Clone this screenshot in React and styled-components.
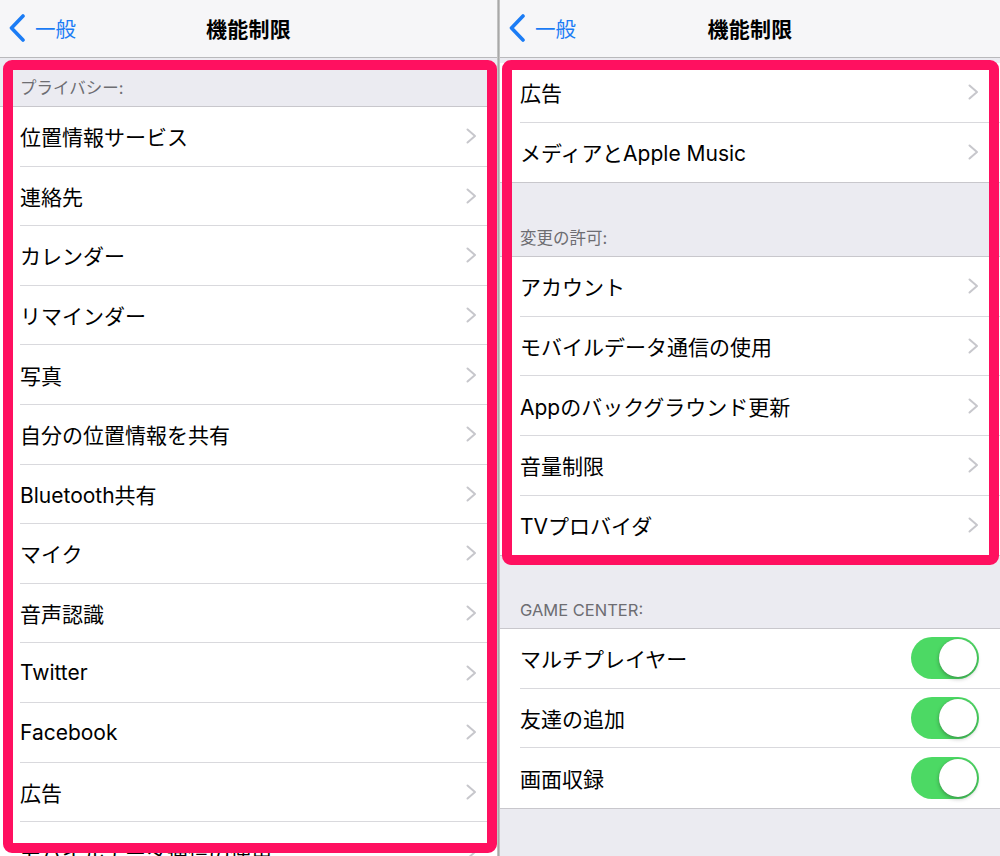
import React from 'react';
import styled, { createGlobalStyle } from 'styled-components';

const GlobalStyle = createGlobalStyle`
  body {
    margin: 0;
    background: #ebebf1;
    font-family: Inter, "Noto Sans CJK JP", sans-serif;
    -webkit-font-smoothing: antialiased;
  }
`;

const Screen = styled.div`
  display: flex;
  width: 1000px;
  height: 856px;
  overflow: hidden;
`;

const Panel = styled.div`
  position: relative;
  flex: none;
  width: ${(p) => p.$width}px;
  height: 856px;
  display: flex;
  flex-direction: column;
  background: #ebebf1;
  overflow: hidden;
`;

const Divider = styled.div`
  flex: none;
  width: 3px;
  background: linear-gradient(90deg, #d0d0d0, #a8a8a8 50%, #d0d0d0);
`;

const NavBar = styled.header`
  flex: none;
  height: 58px;
  box-sizing: border-box;
  padding-bottom: 2px;
  display: grid;
  grid-template-columns: 1fr auto 1fr;
  align-items: center;
  background: #f6f6f8;
  border-bottom: 1px solid #b9b9bc;
`;

const BackButton = styled.div`
  display: flex;
  align-items: center;
  gap: 10px;
  padding-left: 9px;
  color: #1b7cf5;
  font-size: 20.5px;
`;

const BackLabel = styled.span`
  line-height: 28px;
  padding-top: 4px;
`;

const Title = styled.h1`
  margin: 0;
  font-size: 21px;
  font-weight: 700;
  color: #000;
  letter-spacing: 0.3px;
`;

const Spacer = styled.div`
  flex: none;
  height: ${(p) => p.$h}px;
`;

const SectionHeader = styled.div`
  flex: none;
  height: ${(p) => p.$h}px;
  box-sizing: border-box;
  display: flex;
  align-items: flex-end;
  padding: 0 20px 7px;
  font-size: 16.5px;
  line-height: 22px;
  color: #6d6d72;
  border-bottom: 1px solid #c8c7cc;
`;

const Group = styled.div`
  flex: none;
  background: #fff;
  border-bottom: 1px solid #c8c7cc;
`;

const Row = styled.div`
  height: 59.6px;
  box-sizing: border-box;
  padding-left: 20px;
  display: flex;
`;

const RowBody = styled.div`
  flex: 1;
  display: flex;
  align-items: center;
  justify-content: space-between;
  padding-right: ${(p) => p.$pr}px;
  border-bottom: ${(p) => (p.$last ? 'none' : '1px solid #d9d9dd')};
`;

const Label = styled.span`
  font-size: 21px;
  color: #000;
  white-space: nowrap;
`;

const Toggle = styled.div`
  width: 68px;
  height: 42px;
  box-sizing: border-box;
  padding: 2px;
  border-radius: 21px;
  background: #4cd964;
  display: flex;
  justify-content: flex-end;
`;

const Knob = styled.div`
  width: 38px;
  height: 38px;
  border-radius: 50%;
  background: #fff;
  box-shadow: 0 2px 4px rgba(0, 0, 0, 0.28), 0 0 1px rgba(0, 0, 0, 0.2);
`;

const Highlight = styled.div`
  position: absolute;
  top: 60px;
  left: ${(p) => p.$left}px;
  width: ${(p) => p.$w}px;
  height: ${(p) => p.$h}px;
  box-sizing: border-box;
  border: 10px solid #ff1060;
  border-radius: 9px;
  pointer-events: none;
`;

const BackChevron = () => (
  <svg width="16" height="28" viewBox="0 0 16 28">
    <polyline
      points="14,2 2.5,14 14,26"
      fill="none"
      stroke="#1b7cf5"
      strokeWidth="3.6"
      strokeLinecap="round"
      strokeLinejoin="round"
    />
  </svg>
);

const Chevron = () => (
  <svg width="11" height="16" viewBox="0 0 11 16">
    <polyline
      points="1.5,1.5 9,8 1.5,14.5"
      fill="none"
      stroke="#c7c7cc"
      strokeWidth="2"
      strokeLinecap="round"
      strokeLinejoin="round"
    />
  </svg>
);

function Nav() {
  return (
    <NavBar>
      <BackButton>
        <BackChevron />
        <BackLabel>一般</BackLabel>
      </BackButton>
      <Title>機能制限</Title>
      <div />
    </NavBar>
  );
}

function List({ items, toggle, pr = 20 }) {
  return (
    <Group>
      {items.map((label, i) => (
        <Row key={label}>
          <RowBody $last={i === items.length - 1} $pr={pr}>
            <Label>{label}</Label>
            {toggle ? (
              <Toggle>
                <Knob />
              </Toggle>
            ) : (
              <Chevron />
            )}
          </RowBody>
        </Row>
      ))}
    </Group>
  );
}

const privacy = [
  '位置情報サービス',
  '連絡先',
  'カレンダー',
  'リマインダー',
  '写真',
  '自分の位置情報を共有',
  'Bluetooth共有',
  'マイク',
  '音声認識',
  'Twitter',
  'Facebook',
  '広告',
  'モバイルデータ通信の使用',
];

const topRows = ['広告', 'メディアとApple Music'];

const changes = [
  'アカウント',
  'モバイルデータ通信の使用',
  'Appのバックグラウンド更新',
  '音量制限',
  'TVプロバイダ',
];

const gameCenter = ['マルチプレイヤー', '友達の追加', '画面収録'];

export default function App() {
  return (
    <>
      <GlobalStyle />
      <Screen>
        <Panel $width={497}>
          <Nav />
          <SectionHeader $h={49}>プライバシー:</SectionHeader>
          <List items={privacy} />
          <Highlight $left={3} $w={494} $h={793} />
        </Panel>
        <Divider />
        <Panel $width={500}>
          <Nav />
          <Spacer $h={5} />
          <List items={topRows} pr={21} />
          <SectionHeader $h={74}>変更の許可:</SectionHeader>
          <List items={changes} pr={21} />
          <SectionHeader $h={73}>GAME CENTER:</SectionHeader>
          <List items={gameCenter} toggle pr={21} />
          <Highlight $left={2} $w={497} $h={505} />
        </Panel>
      </Screen>
    </>
  );
}
